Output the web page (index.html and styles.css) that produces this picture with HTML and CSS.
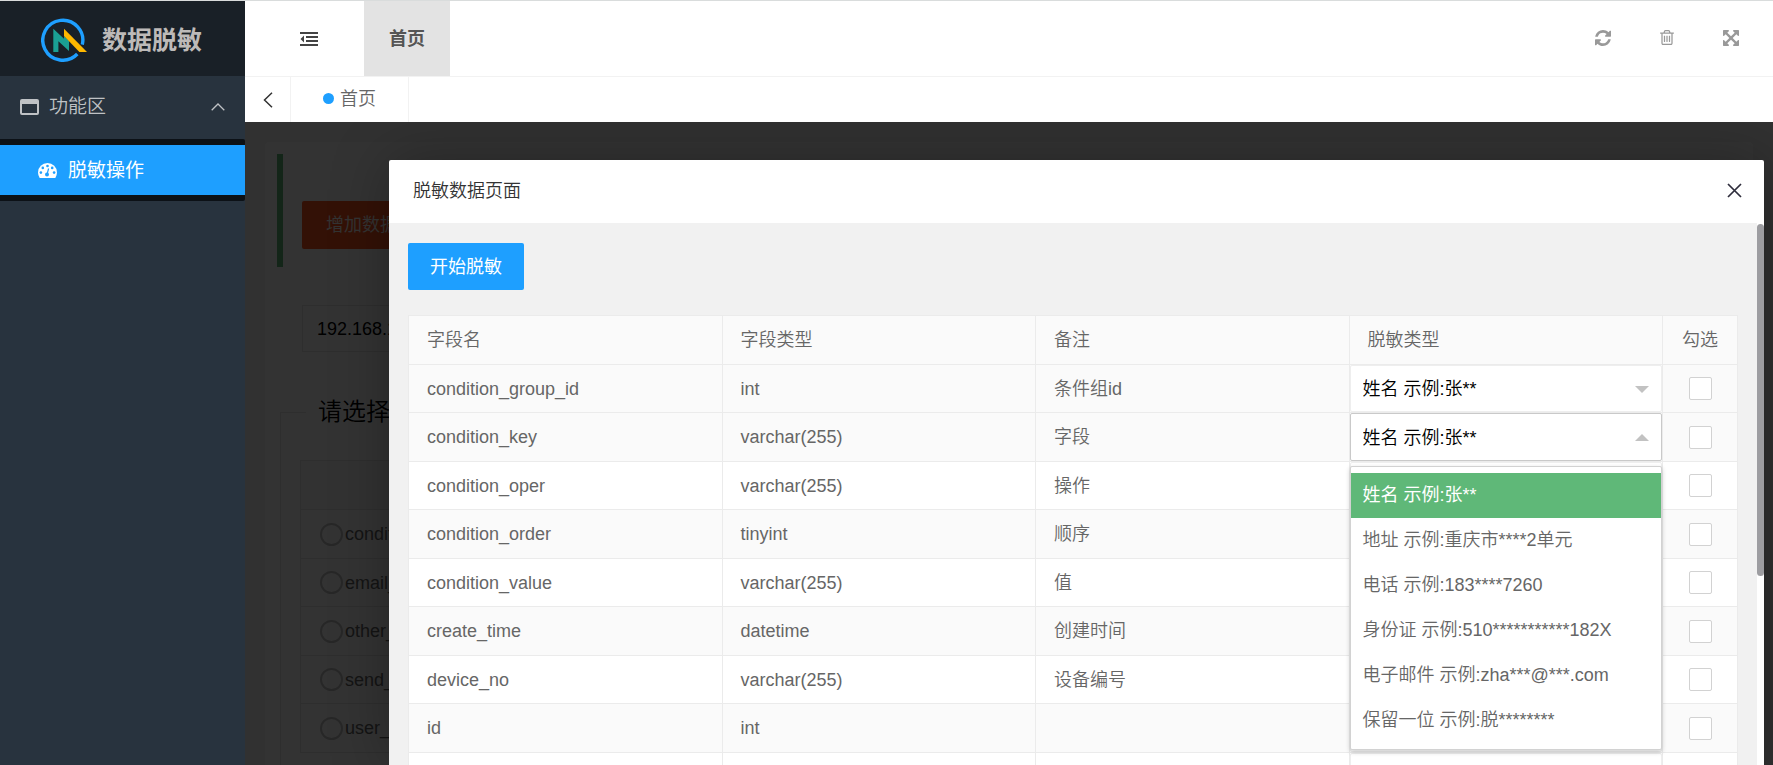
FILE: index.html
```html
<!DOCTYPE html>
<html lang="zh-CN">
<head>
<meta charset="utf-8">
<title>数据脱敏</title>
<link rel="stylesheet" href="styles.css">
</head>
<body>
<div class="app">
  <aside class="sidebar">
    <div class="brand">
      <svg class="brand-logo" viewBox="0 0 48 44" aria-hidden="true">
        <path d="M41.3 26.7A20 20 0 1 0 36.3 36" fill="none" stroke="#1e9fff" stroke-width="3.4"/>
        <path d="M12.3 10.7L23 20.8V18L28 22.7V33L17.4 23.3V34H12.3Z" fill="#1aa094"/>
        <path d="M23 10.7L46 34H38.4L23 18Z" fill="#ffb800"/>
      </svg>
      <span class="brand-name">数据脱敏</span>
    </div>
    <nav>
      <button class="nav-group" type="button">
        <svg class="nav-group-icon" viewBox="0 0 19 16" aria-hidden="true"><path fill="currentColor" fill-rule="evenodd" d="M2 0H17Q19 0 19 2V14Q19 16 17 16H2Q0 16 0 14V2Q0 0 2 0ZM2 5V14H17V5Z"/></svg>
        <span>功能区</span>
        <svg class="nav-group-arrow" viewBox="0 0 14 8" aria-hidden="true"><path d="M.7 7.3L7 1L13.300 7.300" fill="none" stroke="currentColor" stroke-width="1.3"/></svg>
      </button>
      <div class="nav-sub">
        <a class="nav-item" href="#">
          <svg class="nav-item-icon" viewBox="0 0 19 15" aria-hidden="true">
            <path d="M1.700 14.900Q0 12.200 0 9.500A9.500 9.500 0 0 1 19 9.500Q19 12.200 17.300 14.900Z" fill="#fff"/>
            <g fill="#1e9fff"><circle cx="2.900" cy="9.600" r="1.300"/><circle cx="4.800" cy="4.900" r="1.300"/><circle cx="9.500" cy="3" r="1.300"/><circle cx="14.200" cy="4.900" r="1.300"/><circle cx="16.100" cy="9.600" r="1.300"/><circle cx="9" cy="11.500" r="2"/></g>
            <path d="M9 11.500L10.600 5.500" stroke="#1e9fff" stroke-width="1.200"/>
          </svg>
          <span>脱敏操作</span>
        </a>
      </div>
    </nav>
  </aside>

  <div class="main">
    <header class="topbar">
      <button class="icon-button fold" type="button" aria-label="收起菜单">
        <svg width="18" height="14" viewBox="0 0 18 14" aria-hidden="true"><path fill="currentColor" d="M0 0H18V2H0ZM6 4H18V6H6ZM6 8H18V10H6ZM0 12H18V14H0ZM4 3.500V10.500L.5 7Z"/></svg>
      </button>
      <a class="top-link" href="#">首页</a>
      <div class="tools">
        <button class="icon-button" type="button" aria-label="刷新">
          <svg width="16" height="16" viewBox="0 0 1536 1536" aria-hidden="true"><path fill="currentColor" d="M1511 928q0 5-1 7-64 268-268 434.500t-478 166.500q-146 0-282.500-55t-243.500-157l-129 129q-19 19-45 19t-45-19-19-45v-448q0-26 19-45t45-19h448q26 0 45 19t19 45-19 45l-137 137q71 66 161 102t187 36q134 0 250-65t186-179q11-17 53-117 8-23 30-23h192q13 0 22.500 9.500t9.500 22.500zm25-800v448q0 26-19 45t-45 19h-448q-26 0-45-19t-19-45 19-45l138-138q-148-137-349-137-134 0-250 65t-186 179q-11 17-53 117-8 23-30 23h-199q-13 0-22.500-9.500t-9.500-22.500v-7q65-268 270-434.500t480-166.500q146 0 284 55.500t245 156.500l130-129q19-19 45-19t45 19 19 45z"/></svg>
        </button>
        <button class="icon-button" type="button" aria-label="清理缓存">
          <svg width="14" height="15" viewBox="0 0 1408 1536" aria-hidden="true"><path fill="currentColor" d="M512 608v576q0 14-9 23t-23 9h-64q-14 0-23-9t-9-23v-576q0-14 9-23t23-9h64q14 0 23 9t9 23zM768 608v576q0 14-9 23t-23 9h-64q-14 0-23-9t-9-23v-576q0-14 9-23t23-9h64q14 0 23 9t9 23zM1024 608v576q0 14-9 23t-23 9h-64q-14 0-23-9t-9-23v-576q0-14 9-23t23-9h64q14 0 23 9t9 23zM1152 1332v-948h-896v948q0 22 7 40.500t14.500 27 10.500 8.500h832q3 0 10.500-8.500t14.500-27 7-40.500zM480 256h448l-48-117q-7-9-17-11h-317q-10 2-17 11zM1408 288v64q0 14-9 23t-23 9h-96v948q0 83-47 143.500t-113 60.500h-832q-66 0-113-58.500t-47-141.500v-952h-96q-14 0-23-9t-9-23v-64q0-14 9-23t23-9h309l70-167q15-37 54-63t79-26h320q40 0 79 26t54 63l70 167h309q14 0 23 9t9 23z"/></svg>
        </button>
        <button class="icon-button" type="button" aria-label="全屏">
          <svg width="16" height="16" viewBox="0 0 1536 1536" aria-hidden="true"><path fill="currentColor" d="M1283 413l-355 355 355 355 144-144q29-31 70-14 39 17 39 59v448q0 26-19 45t-45 19h-448q-42 0-59-40-17-39 14-69l144-144-355-355-355 355 144 144q31 30 14 69-17 40-59 40h-448q-26 0-45-19t-19-45v-448q0-42 40-59 39-17 69 14l144 144 355-355-355-355-144 144q-19 19-45 19-12 0-24-5-40-17-40-59v-448q0-26 19-45t45-19h448q42 0 59 40 17 39-14 69l-144 144 355 355 355-355-144-144q-31-30-14-69 17-40 59-40h448q26 0 45 19t19 45v448q0 42-39 59-13 5-25 5-26 0-45-19z"/></svg>
        </button>
      </div>
    </header>
    <div class="tabs">
      <button class="tabs-prev" type="button" aria-label="向左">
        <svg width="10" height="16" viewBox="0 0 10 16" aria-hidden="true"><path d="M9 .7L1.500 8L9 15.300" fill="none" stroke="#333" stroke-width="1.500"/></svg>
      </button>
      <a class="tab" href="#"><span class="tab-dot"></span>首页</a>
    </div>

    <div class="content">
      <div class="card">
        <div class="quote"><button class="danger" type="button">增加数据</button></div>
        <input class="host" type="text" value="192.168.1" aria-label="主机">
        <fieldset class="picker">
          <legend>请选择</legend>
          <div class="picker-list">
            <div class="picker-head"></div>
            <label class="picker-row"><input type="radio" name="tbl">condit</label>
            <label class="picker-row"><input type="radio" name="tbl">email_</label>
            <label class="picker-row"><input type="radio" name="tbl">other_</label>
            <label class="picker-row"><input type="radio" name="tbl">send_</label>
            <label class="picker-row"><input type="radio" name="tbl">user_</label>
          </div>
        </fieldset>
      </div>

      <div class="shade"></div>

      <section class="modal" role="dialog" aria-labelledby="modal-title">
        <div class="modal-head">
          <h2 id="modal-title">脱敏数据页面</h2>
          <button class="close" type="button" aria-label="关闭">
            <svg width="15" height="15" viewBox="0 0 15 15" aria-hidden="true"><path d="M1 1L14 14M14 1L1 14" stroke="#2e2d3c" stroke-width="1.700"/></svg>
          </button>
        </div>
        <div class="modal-body">
          <div class="modal-page">
            <button class="primary" type="button">开始脱敏</button>
            <table class="fields">
              <thead>
                <tr><th>字段名</th><th>字段类型</th><th>备注</th><th>脱敏类型</th><th class="check">勾选</th></tr>
              </thead>
              <tbody>
                <tr class="hover"><td>condition_group_id</td><td>int</td><td>条件组id</td>
                  <td class="pick"><div class="select"><select aria-label="condition_group_id 脱敏类型"><option>姓名 示例:张**</option></select></div></td>
                  <td class="check"><input type="checkbox" aria-label="勾选 condition_group_id"></td></tr>
                <tr><td>condition_key</td><td>varchar(255)</td><td>字段</td>
                  <td class="pick"><div class="select open"><select aria-label="condition_key 脱敏类型"><option>姓名 示例:张**</option></select>
                    <ul class="options" role="listbox" aria-label="脱敏类型">
                      <li class="selected" role="option" aria-selected="true">姓名 示例:张**</li>
                      <li role="option">地址 示例:重庆市****2单元</li>
                      <li role="option">电话 示例:183****7260</li>
                      <li role="option">身份证 示例:510***********182X</li>
                      <li role="option">电子邮件 示例:zha***@***.com</li>
                      <li role="option">保留一位 示例:脱********</li>
                    </ul></div></td>
                  <td class="check"><input type="checkbox" aria-label="勾选 condition_key"></td></tr>
                <tr><td>condition_oper</td><td>varchar(255)</td><td>操作</td>
                  <td class="pick"><div class="select"></div></td>
                  <td class="check"><input type="checkbox" aria-label="勾选 condition_oper"></td></tr>
                <tr><td>condition_order</td><td>tinyint</td><td>顺序</td>
                  <td class="pick"><div class="select"></div></td>
                  <td class="check"><input type="checkbox" aria-label="勾选 condition_order"></td></tr>
                <tr><td>condition_value</td><td>varchar(255)</td><td>值</td>
                  <td class="pick"><div class="select"></div></td>
                  <td class="check"><input type="checkbox" aria-label="勾选 condition_value"></td></tr>
                <tr><td>create_time</td><td>datetime</td><td>创建时间</td>
                  <td class="pick"><div class="select"></div></td>
                  <td class="check"><input type="checkbox" aria-label="勾选 create_time"></td></tr>
                <tr><td>device_no</td><td>varchar(255)</td><td>设备编号</td>
                  <td class="pick"><div class="select"></div></td>
                  <td class="check"><input type="checkbox" aria-label="勾选 device_no"></td></tr>
                <tr><td>id</td><td>int</td><td></td>
                  <td class="pick"><div class="select"></div></td>
                  <td class="check"><input type="checkbox" aria-label="勾选 id"></td></tr>
                <tr><td></td><td></td><td></td><td class="pick"><div class="select"></div></td><td class="check"></td></tr>
              </tbody>
            </table>
          </div>
          <div class="scrollbar"><div class="scrollbar-thumb"></div></div>
        </div>
      </section>
    </div>
  </div>
</div>
</body>
</html>
```

FILE: styles.css
```css
* {
  box-sizing: border-box;
}

body {
  margin: 0;
  color: #666;
  font: 350 18px/24px "Liberation Sans", "Noto Sans CJK SC", sans-serif;
}

button,
input,
select {
  margin: 0;
  padding: 0;
  border: 0;
  background: none;
  color: inherit;
  font: inherit;
}

a {
  color: inherit;
  text-decoration: none;
}

.app {
  display: grid;
  grid-template-rows: minmax(0, 1fr);
  grid-template-columns: 245px minmax(0, 1fr);
  height: 100vh;
  overflow: hidden;
  border-top: 1px solid #d9dcdc;
}

/* Sidebar */
.sidebar {
  background: #28333e;
  color: #bfc2c5;
}

.brand {
  display: flex;
  align-items: center;
  gap: 13px;
  height: 75px;
  padding: 2px 0 0 41px;
  background: #192027;
}

.brand-logo {
  width: 48px;
  height: 44px;
}

.brand-name {
  color: #bdbab9;
  font-size: 25px;
  font-weight: 700;
}

.nav-group {
  display: flex;
  align-items: center;
  width: 100%;
  height: 63px;
  padding: 0 20px 2px;
  font-size: 19px;
  text-align: left;
}

.nav-group span {
  flex: 1;
  margin-left: 10px;
}

.nav-group-icon {
  width: 19px;
  height: 16px;
}

.nav-group-arrow {
  width: 14px;
  height: 8px;
}

.nav-sub {
  padding: 6px 0;
  border-radius: 0 2px 2px 0;
  background: #0c1116;
}

.nav-item {
  display: flex;
  align-items: center;
  gap: 11px;
  height: 50px;
  padding: 1px 0 0 38px;
  background: #1e9fff;
  color: #fff;
  font-size: 19px;
  font-weight: 400;
}

.nav-item-icon {
  width: 19px;
  height: 15px;
}

/* Header */
.main {
  display: flex;
  flex-direction: column;
  min-width: 0;
}

.topbar {
  display: flex;
  flex: none;
  height: 76px;
  border-bottom: 1px solid #f2f2f2;
  background: #fff;
}

.icon-button {
  display: flex;
  align-items: center;
  justify-content: center;
  width: 64px;
  height: 73px;
  color: #999;
}

.fold {
  width: 119px;
  height: 75px;
  padding-left: 9px;
  color: #444;
}

.top-link {
  display: flex;
  align-items: center;
  padding: 0 25px;
  background: #e3e3e3;
  color: #555;
  font-weight: 700;
}

.tools {
  display: flex;
  margin-left: auto;
  padding-right: 10px;
}

.tabs {
  display: flex;
  flex: none;
  height: 45px;
  background: #fff;
}

.tabs-prev {
  display: flex;
  align-items: center;
  justify-content: center;
  width: 46px;
  border-right: 1px solid #f2f2f2;
}

.tab {
  display: flex;
  align-items: center;
  gap: 6px;
  padding: 0 32px 2px;
  border-right: 1px solid #f2f2f2;
}

.tab-dot {
  width: 11px;
  height: 11px;
  border-radius: 50%;
  background: #1e9fff;
}

/* Page behind the dialog */
.content {
  position: relative;
  flex: 1;
  min-height: 0;
  overflow: hidden;
  padding: 20px 20px 0;
  background: #f2f2f2;
}

.card {
  padding: 12px;
  border-radius: 4px;
  background: #fff;
}

.quote {
  height: 113px;
  padding: 47px 19px 0;
  border-left: 6px solid #5fb878;
  background: #fdfdfd;
}

.danger {
  height: 48px;
  padding: 0 24px;
  border-radius: 2px;
  background: #ff5722;
  color: #fff;
}

.host {
  display: block;
  width: 120px;
  height: 47px;
  margin: 38px 0 0 25px;
  padding: 2px 0 0 14px;
  border: 1px solid #e6e6e6;
  color: #000;
}

.picker {
  margin: 47px 3px 0;
  padding: 35px 19px 20px;
  border: 1px solid #e6e6e6;
}

.picker legend {
  margin-left: 6px;
  padding: 0 12px;
  color: #000;
  font-size: 24px;
  line-height: 26px;
}

.picker-list {
  border: 1px solid #e6e6e6;
  border-bottom: 0;
}

.picker-head,
.picker-row {
  display: flex;
  height: 49px;
  border-bottom: 1px solid #e6e6e6;
}

.picker-head {
  background: #f8f8f8;
}

.picker-row {
  align-items: center;
  gap: 2px;
  padding-left: 19px;
}

.picker-row:nth-child(odd) {
  height: 48px;
}

.picker-row input {
  appearance: none;
  width: 23px;
  height: 23px;
  border: 2px solid #c2c2c2;
  border-radius: 50%;
}

.shade {
  position: absolute;
  inset: 0;
  background: rgba(0, 0, 0, .8);
}

/* Dialog */
.modal {
  position: absolute;
  inset: 38px 9px 0 144px;
  display: flex;
  flex-direction: column;
  border-radius: 2px 2px 0 0;
  background: #fff;
  box-shadow: 1px 1px 60px rgba(0, 0, 0, .3);
}

.modal-head {
  display: flex;
  flex: none;
  align-items: center;
  justify-content: space-between;
  height: 63px;
  padding: 0 22px 2px 24px;
  color: #333;
}

.modal-head h2 {
  margin: 0;
  font-size: 18px;
  font-weight: 350;
}

.close {
  display: flex;
}

.modal-body {
  display: flex;
  flex: 1;
  min-height: 0;
}

.modal-page {
  flex: 1;
  overflow: hidden;
  padding: 20px 19px 0;
  background: #f1f1f1;
}

.primary {
  display: block;
  height: 47px;
  padding: 0 22px;
  border-radius: 2px;
  background: #1e9fff;
  color: #fff;
  font-weight: 400;
}

.scrollbar {
  width: 7px;
  padding-top: 1px;
}

.scrollbar-thumb {
  height: 65%;
  border-radius: 4px;
  background: #9d9da1;
}

/* Table */
.fields {
  width: 100%;
  margin-top: 25px;
  border: solid #ebebeb;
  border-width: 1px 0 0 1px;
  border-spacing: 0;
  table-layout: fixed;
  background: #fff;
}

.fields th,
.fields td {
  height: 49px;
  padding: 0 18px;
  border: solid #ebebeb;
  border-width: 0 1px 1px 0;
  font-weight: 350;
  text-align: left;
}

.fields th {
  background: #fafafa;
}

.fields tbody tr:nth-child(odd) td {
  height: 48px;
}

.fields tbody tr:nth-child(even),
.fields .hover {
  background: #fafafa;
}

.fields .check {
  width: 75px;
  padding: 0;
  text-align: center;
}

.fields .pick {
  padding: 0;
}

.check input {
  appearance: none;
  display: block;
  width: 23px;
  height: 23px;
  margin: 0 auto;
  border: 1px solid #d2d2d2;
  border-radius: 2px;
  background: #fff;
}

.select {
  position: relative;
  height: 47px;
  border: 1px solid #eee;
  border-radius: 2px;
  background: #fff;
}

.select.open {
  height: 48px;
  border-color: #c9c9c9;
}

.select select {
  appearance: none;
  display: block;
  width: 100%;
  height: 100%;
  padding: 1px 12px 0;
  color: #000;
}

.select::after {
  content: "";
  position: absolute;
  top: 20px;
  right: 12px;
  border: solid transparent;
  border-width: 7px 7px 0;
  border-top-color: #c2c2c2;
}

.select.open::after {
  border-width: 0 7px 7px;
  border-bottom-color: #c2c2c2;
}

.options {
  position: absolute;
  z-index: 1;
  top: 52px;
  right: -1px;
  left: -1px;
  margin: 0;
  padding: 6px 0;
  border: 1px solid #d2d2d2;
  border-radius: 2px;
  background: #fff;
  box-shadow: 0 2px 5px rgba(0, 0, 0, .2);
  list-style: none;
}

.options li {
  padding: 0 12px;
  line-height: 45px;
}

.options .selected {
  background: #5fb878;
  color: #fff;
  font-weight: 400;
}
```
